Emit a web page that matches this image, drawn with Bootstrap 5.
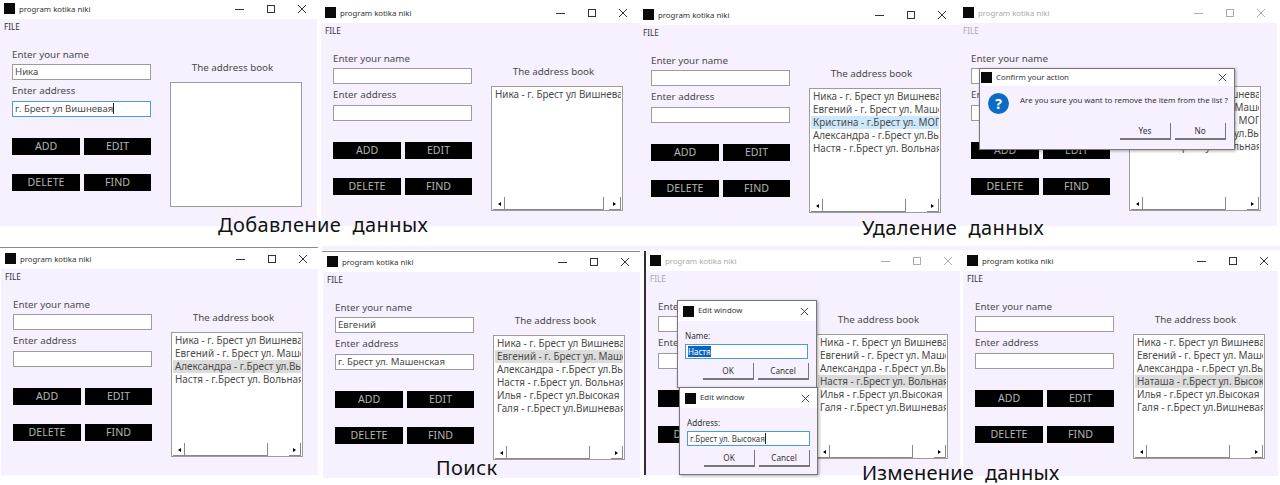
<!DOCTYPE html>
<html lang="ru">
<head>
  <meta charset="UTF-8" />
  <meta name="viewport" content="width=device-width, initial-scale=1" />
  <title>program kotika niki</title>
  <link href="https://cdn.jsdelivr.net/npm/bootstrap@5.3.0/dist/css/bootstrap.min.css" rel="stylesheet" />
  <style>
    body { background: #fff; overflow: hidden; font-family: "Noto Sans", "Open Sans", sans-serif; color: #4a4a4a; }
    .collage { position: relative; width: 1280px; height: 485px; overflow: hidden; }

    /* windows on the collage */
    .app-win { position: absolute; background: #f7f1ff; overflow: hidden; }
    #w1 { left: 0; top: 0; width: 317px; height: 226px; }
    #w2 { left: 321px; top: 4px; width: 319px; height: 222px; }
    #w3 { left: 639px; top: 6px; width: 321px; height: 220px; }
    #w4 { left: 959px; top: 4px; width: 318px; height: 222px; }
    #w5 { left: 1px; top: 250px; width: 317px; height: 225px; }
    #w6 { left: 323px; top: 253px; width: 317px; height: 225px; }
    #w7 { left: 646px; top: 252px; width: 314px; height: 223px; }
    #w8 { left: 963px; top: 252px; width: 315px; height: 224px; }
    .top-line { position: absolute; background: #8c8c8c; height: 1px; }
    #l5 { left: 0; top: 247px; width: 318px; }
    #l6 { left: 322px; top: 251px; width: 318px; }
    #l7 { left: 644px; top: 251px; width: 2px; height: 224px; background: #3a2a33; }
    #band { left: 322px; top: 246px; width: 958px; height: 4px; background: #f7f1ff; }

    .win-head { height: 19px; background: #fff; padding-left: 4px; color: #333; font-size: 7.8px; }
    .win-logo { width: 11px; height: 11px; margin-top: -2px; background: #0a0a0a; flex: none; margin-right: 4px; }
    .win-ctrl { margin-left: auto; margin-top: -2px; padding-right: 9px; gap: 19px; }
    .win-ctrl svg { display: block; width: 12px; height: 12px; }
    #w2 .win-ctrl { padding-right: 11px; }
    #w3 .win-ctrl { padding-right: 12px; }
    #w4 .win-ctrl { padding-right: 10px; }
    #w7 .win-ctrl { padding-right: 6px; }
    #w8 .win-ctrl { padding-right: 8px; }
    .win-menu { height: 16px; padding-left: 4px; font-size: 8.2px; line-height: 16px; color: #333; }
    .is-idle .win-head, .is-idle .win-menu { color: #aaa; }
    .is-idle .win-ctrl { opacity: .4; }

    .side-left { width: 139px; margin-left: 12px; margin-right: 19px; flex: none; padding-top: 12px; }
    .side-right { width: 132px; flex: none; padding-top: 25px; }
    .field-cap { height: 17px; line-height: 16px; font-size: 9.8px; white-space: nowrap; }
    .field-gap { height: 18px; margin-top: 3px; }
    .form-control.win-input { height: 16px; min-height: 0; padding: 0 2px; border: 1px solid #9c9c9c; border-radius: 0; font-size: 9.6px; line-height: 14px; color: #4a4a4a; background: #fff; white-space: nowrap; box-shadow: none; }
    .form-control.win-input.is-focus { border-color: #4a9ae0; }
    .caret-bar { display: inline-block; width: 1px; height: 11px; background: #222; vertical-align: -2px; }
    .btn-grid { display: grid; grid-template-columns: 68px 67px; column-gap: 4px; row-gap: 19px; margin-top: 21px; }
    .btn.win-black { height: 17px; padding: 0; border: 0; border-radius: 0; background: #000; color: #b4b4b4; font-size: 10.6px; line-height: 17px; }

    .book-cap { height: 16px; line-height: 16px; margin-bottom: 6px; padding-right: 7px; font-size: 9.8px; text-align: center; white-space: nowrap; }
    .book-list { position: relative; height: 125px; background: #fff; border: 1px solid #9c9c9c; padding: 1px 1px 0 1px; overflow: hidden; }
    .book-row { height: 13px; line-height: 13px; padding-left: 2px; font-size: 9.9px; white-space: nowrap; overflow: hidden; }
    .book-row.is-sel { background: #dcdcdc; }
    .book-row.is-hot { background: #cde8fb; }
    .scroll-bar { position: absolute; left: 1px; right: 1px; bottom: 0; height: 13px; background: #fff; }
    .scroll-arrow { position: absolute; top: 5px; width: 0; height: 0; border-top: 2px solid transparent; border-bottom: 2px solid transparent; }
    .scroll-arrow.to-left { left: 5px; border-right: 3px solid #000; }
    .scroll-arrow.to-right { right: 5px; border-left: 3px solid #000; }
    .scroll-start { position: absolute; left: 0; top: 0; width: 11px; height: 13px; border-bottom: 1px solid #8a8a8a; }
    .scroll-thumb { position: absolute; left: 11px; top: 0; width: 84px; height: 13px; border: 1px solid #8a8a8a; border-top: 0; }
    .scroll-thumb.scroll-wide { width: 100px; }
    .scroll-end { position: absolute; right: 0; top: 0; width: 12px; height: 13px; border-right: 1px solid #8a8a8a; border-bottom: 1px solid #8a8a8a; }

    /* dialogs lie over the windows */
    .pop-win { position: absolute; background: #f7f1ff; border: 1px solid #777; box-shadow: 1px 1px 3px rgba(0,0,0,.35); }
    #confirm { left: 979px; top: 68px; width: 256px; height: 82px; }
    #edit1 { left: 677px; top: 300px; width: 140px; height: 88px; }
    #edit2 { left: 679px; top: 387px; width: 139px; height: 88px; }
    .pop-head { height: 20px; background: #fff; padding: 0 6px 0 5px; font-size: 7.8px; color: #333; }
    .pop-head .win-logo { margin-top: 0; }
    #confirm .pop-head { height: 17px; padding-left: 1px; }
    .pop-x { width: 11px; height: 11px; margin-left: auto; }
    .pop-body { padding: 8px 7px 0; }
    .btn.pop-btn { width: 51px; height: 17px; padding: 0; border: 0; border-right: 1px solid #777; border-bottom: 2px solid #777; border-radius: 0; background: #f7f1ff; color: #333; font-size: 8.2px; line-height: 15px; }
    .pop-cap { font-size: 8.2px; line-height: 13px; height: 15px; color: #333; }
    .pop-text { margin-top: 1px; font-size: 7.9px; line-height: 13px; white-space: nowrap; color: #333; }
    .ask-icon { width: 21px; height: 21px; flex: none; }
    .ask-row { padding: 7px 8px 0; gap: 11px; }
    .confirm-actions { margin-top: 9px; padding-right: 8px; }
    .form-control.pop-input { width: 123px; height: 15px; min-height: 0; padding: 0 2px; border: 1px solid #4a9ae0; border-radius: 0; font-size: 8px; line-height: 13px; color: #444; background: #fff; white-space: nowrap; box-shadow: none; }
    .picked-text { background: #0a64c8; color: #fff; }

    .sheet-title { position: absolute; font-size: 20px; line-height: 24px; color: #111; white-space: pre; letter-spacing: .4px; }
    #t1 { left: 218px; top: 213px; }
    #t2 { left: 862px; top: 216px; }
    #t3 { left: 436px; top: 456px; }
    #t4 { left: 862px; top: 461px; letter-spacing: .2px; }
  </style>
</head>
<body>
  <svg class="d-none">
    <symbol id="i-min" viewBox="0 0 12 12"><path d="M1 6.5h9" stroke="#333" fill="none" /></symbol>
    <symbol id="i-max" viewBox="0 0 12 12"><rect x="2.5" y="2.5" width="7" height="7" stroke="#333" fill="none" /></symbol>
    <symbol id="i-close" viewBox="0 0 12 12"><path d="M2 2l8 8M10 2l-8 8" stroke="#333" fill="none" /></symbol>
  </svg>

  <div class="collage">
    <div id="band" class="top-line"></div>
    <div id="l5" class="top-line"></div>
    <div id="l6" class="top-line"></div>
    <div id="l7" class="top-line"></div>

    <!-- add -->
    <div id="w1" class="app-win">
      <div class="win-head d-flex align-items-center"><span class="win-logo"></span>program kotika niki<div class="win-ctrl d-flex"><svg><use href="#i-min" /></svg><svg><use href="#i-max" /></svg><svg><use href="#i-close" /></svg></div></div>
      <div class="win-menu">FILE</div>
      <div class="d-flex">
        <div class="side-left">
          <div class="field-cap">Enter your name</div>
          <div class="form-control win-input">Ника</div>
          <div class="field-cap field-gap">Enter address</div>
          <div class="form-control win-input is-focus">г. Брест ул Вишневая<span class="caret-bar"></span></div>
          <div class="btn-grid"><button class="btn win-black">ADD</button><button class="btn win-black">EDIT</button><button class="btn win-black">DELETE</button><button class="btn win-black">FIND</button></div>
        </div>
        <div class="side-right">
          <div class="book-cap">The address book</div>
          <div class="book-list"></div>
        </div>
      </div>
    </div>

    <div id="w2" class="app-win">
      <div class="win-head d-flex align-items-center"><span class="win-logo"></span>program kotika niki<div class="win-ctrl d-flex"><svg><use href="#i-min" /></svg><svg><use href="#i-max" /></svg><svg><use href="#i-close" /></svg></div></div>
      <div class="win-menu">FILE</div>
      <div class="d-flex">
        <div class="side-left">
          <div class="field-cap">Enter your name</div>
          <div class="form-control win-input"></div>
          <div class="field-cap field-gap">Enter address</div>
          <div class="form-control win-input"></div>
          <div class="btn-grid"><button class="btn win-black">ADD</button><button class="btn win-black">EDIT</button><button class="btn win-black">DELETE</button><button class="btn win-black">FIND</button></div>
        </div>
        <div class="side-right">
          <div class="book-cap">The address book</div>
          <div class="book-list">
            <div class="book-row">Ника - г. Брест ул Вишневая</div>
            <div class="scroll-bar"><i class="scroll-start"></i><i class="scroll-arrow to-left"></i><i class="scroll-thumb scroll-wide"></i><i class="scroll-end"></i><i class="scroll-arrow to-right"></i></div>
          </div>
        </div>
      </div>
    </div>

    <!-- delete -->
    <div id="w3" class="app-win">
      <div class="win-head d-flex align-items-center"><span class="win-logo"></span>program kotika niki<div class="win-ctrl d-flex"><svg><use href="#i-min" /></svg><svg><use href="#i-max" /></svg><svg><use href="#i-close" /></svg></div></div>
      <div class="win-menu">FILE</div>
      <div class="d-flex">
        <div class="side-left">
          <div class="field-cap">Enter your name</div>
          <div class="form-control win-input"></div>
          <div class="field-cap field-gap">Enter address</div>
          <div class="form-control win-input"></div>
          <div class="btn-grid"><button class="btn win-black">ADD</button><button class="btn win-black">EDIT</button><button class="btn win-black">DELETE</button><button class="btn win-black">FIND</button></div>
        </div>
        <div class="side-right">
          <div class="book-cap">The address book</div>
          <div class="book-list">
            <div class="book-row">Ника - г. Брест ул Вишневая</div>
            <div class="book-row">Евгений - г. Брест ул. Машенская</div>
            <div class="book-row is-hot">Кристина - г.Брест ул. МОПРа</div>
            <div class="book-row">Александра - г.Брест ул.Высокая</div>
            <div class="book-row">Настя - г.Брест ул. Вольная</div>
            <div class="scroll-bar"><i class="scroll-start"></i><i class="scroll-arrow to-left"></i><i class="scroll-thumb"></i><i class="scroll-end"></i><i class="scroll-arrow to-right"></i></div>
          </div>
        </div>
      </div>
    </div>

    <div id="w4" class="app-win is-idle">
      <div class="win-head d-flex align-items-center"><span class="win-logo"></span>program kotika niki<div class="win-ctrl d-flex"><svg><use href="#i-min" /></svg><svg><use href="#i-max" /></svg><svg><use href="#i-close" /></svg></div></div>
      <div class="win-menu">FILE</div>
      <div class="d-flex">
        <div class="side-left">
          <div class="field-cap">Enter your name</div>
          <div class="form-control win-input"></div>
          <div class="field-cap field-gap">Enter address</div>
          <div class="form-control win-input"></div>
          <div class="btn-grid"><button class="btn win-black">ADD</button><button class="btn win-black">EDIT</button><button class="btn win-black">DELETE</button><button class="btn win-black">FIND</button></div>
        </div>
        <div class="side-right">
          <div class="book-cap">The address book</div>
          <div class="book-list">
            <div class="book-row">Ника - г. Брест ул Вишневая</div>
            <div class="book-row">Евгений - г. Брест ул. Машенская</div>
            <div class="book-row">Кристина - г.Брест ул. МОПРа</div>
            <div class="book-row">Александра - г.Брест ул.Высокая</div>
            <div class="book-row">Настя - г.Брест ул. Вольная</div>
            <div class="scroll-bar"><i class="scroll-start"></i><i class="scroll-arrow to-left"></i><i class="scroll-thumb"></i><i class="scroll-end"></i><i class="scroll-arrow to-right"></i></div>
          </div>
        </div>
      </div>
    </div>

    <div id="confirm" class="pop-win">
      <div class="pop-head d-flex align-items-center"><span class="win-logo"></span>Confirm your action<svg class="pop-x"><use href="#i-close" /></svg></div>
      <div class="d-flex ask-row">
        <svg class="ask-icon" viewBox="0 0 21 21"><circle cx="10.5" cy="10.5" r="10.5" fill="#0a6cc4" /><text x="10.5" y="15.5" font-size="14" font-weight="700" text-anchor="middle" fill="#fff" font-family="Noto Sans, sans-serif">?</text></svg>
        <div class="pop-text">Are you sure you want to remove the item from the list ?</div>
      </div>
      <div class="d-flex justify-content-end gap-1 confirm-actions"><button class="btn pop-btn">Yes</button><button class="btn pop-btn">No</button></div>
    </div>

    <!-- search -->
    <div id="w5" class="app-win">
      <div class="win-head d-flex align-items-center"><span class="win-logo"></span>program kotika niki<div class="win-ctrl d-flex"><svg><use href="#i-min" /></svg><svg><use href="#i-max" /></svg><svg><use href="#i-close" /></svg></div></div>
      <div class="win-menu">FILE</div>
      <div class="d-flex">
        <div class="side-left">
          <div class="field-cap">Enter your name</div>
          <div class="form-control win-input"></div>
          <div class="field-cap field-gap">Enter address</div>
          <div class="form-control win-input"></div>
          <div class="btn-grid"><button class="btn win-black">ADD</button><button class="btn win-black">EDIT</button><button class="btn win-black">DELETE</button><button class="btn win-black">FIND</button></div>
        </div>
        <div class="side-right">
          <div class="book-cap">The address book</div>
          <div class="book-list">
            <div class="book-row">Ника - г. Брест ул Вишневая</div>
            <div class="book-row">Евгений - г. Брест ул. Машенская</div>
            <div class="book-row is-sel">Александра - г.Брест ул.Высокая</div>
            <div class="book-row">Настя - г.Брест ул. Вольная</div>
            <div class="scroll-bar"><i class="scroll-start"></i><i class="scroll-arrow to-left"></i><i class="scroll-thumb"></i><i class="scroll-end"></i><i class="scroll-arrow to-right"></i></div>
          </div>
        </div>
      </div>
    </div>

    <div id="w6" class="app-win">
      <div class="win-head d-flex align-items-center"><span class="win-logo"></span>program kotika niki<div class="win-ctrl d-flex"><svg><use href="#i-min" /></svg><svg><use href="#i-max" /></svg><svg><use href="#i-close" /></svg></div></div>
      <div class="win-menu">FILE</div>
      <div class="d-flex">
        <div class="side-left">
          <div class="field-cap">Enter your name</div>
          <div class="form-control win-input">Евгений</div>
          <div class="field-cap field-gap">Enter address</div>
          <div class="form-control win-input">г. Брест ул. Машенская</div>
          <div class="btn-grid"><button class="btn win-black">ADD</button><button class="btn win-black">EDIT</button><button class="btn win-black">DELETE</button><button class="btn win-black">FIND</button></div>
        </div>
        <div class="side-right">
          <div class="book-cap">The address book</div>
          <div class="book-list">
            <div class="book-row">Ника - г. Брест ул Вишневая</div>
            <div class="book-row is-sel">Евгений - г. Брест ул. Машенская</div>
            <div class="book-row">Александра - г.Брест ул.Высокая</div>
            <div class="book-row">Настя - г.Брест ул. Вольная</div>
            <div class="book-row">Илья - г.Брест ул.Высокая</div>
            <div class="book-row">Галя - г.Брест ул.Вишневая</div>
            <div class="scroll-bar"><i class="scroll-start"></i><i class="scroll-arrow to-left"></i><i class="scroll-thumb"></i><i class="scroll-end"></i><i class="scroll-arrow to-right"></i></div>
          </div>
        </div>
      </div>
    </div>

    <!-- edit -->
    <div id="w7" class="app-win is-idle">
      <div class="win-head d-flex align-items-center"><span class="win-logo"></span>program kotika niki<div class="win-ctrl d-flex"><svg><use href="#i-min" /></svg><svg><use href="#i-max" /></svg><svg><use href="#i-close" /></svg></div></div>
      <div class="win-menu">FILE</div>
      <div class="d-flex">
        <div class="side-left">
          <div class="field-cap">Enter your name</div>
          <div class="form-control win-input"></div>
          <div class="field-cap field-gap">Enter address</div>
          <div class="form-control win-input"></div>
          <div class="btn-grid"><button class="btn win-black">ADD</button><button class="btn win-black">EDIT</button><button class="btn win-black">DELETE</button><button class="btn win-black">FIND</button></div>
        </div>
        <div class="side-right">
          <div class="book-cap">The address book</div>
          <div class="book-list">
            <div class="book-row">Ника - г. Брест ул Вишневая</div>
            <div class="book-row">Евгений - г. Брест ул. Машенская</div>
            <div class="book-row">Александра - г.Брест ул.Высокая</div>
            <div class="book-row is-sel">Настя - г.Брест ул. Вольная</div>
            <div class="book-row">Илья - г.Брест ул.Высокая</div>
            <div class="book-row">Галя - г.Брест ул.Вишневая</div>
            <div class="scroll-bar"><i class="scroll-start"></i><i class="scroll-arrow to-left"></i><i class="scroll-thumb"></i><i class="scroll-end"></i><i class="scroll-arrow to-right"></i></div>
          </div>
        </div>
      </div>
    </div>

    <div id="edit1" class="pop-win">
      <div class="pop-head d-flex align-items-center"><span class="win-logo"></span>Edit window<svg class="pop-x"><use href="#i-close" /></svg></div>
      <div class="pop-body">
        <div class="pop-cap">Name:</div>
        <div class="form-control pop-input"><span class="picked-text">Настя</span></div>
        <div class="d-flex justify-content-end gap-1 mt-1"><button class="btn pop-btn">OK</button><button class="btn pop-btn">Cancel</button></div>
      </div>
    </div>
    <div id="edit2" class="pop-win">
      <div class="pop-head d-flex align-items-center"><span class="win-logo"></span>Edit window<svg class="pop-x"><use href="#i-close" /></svg></div>
      <div class="pop-body">
        <div class="pop-cap">Address:</div>
        <div class="form-control pop-input">г.Брест ул. Высокая<span class="caret-bar"></span></div>
        <div class="d-flex justify-content-end gap-1 mt-1"><button class="btn pop-btn">OK</button><button class="btn pop-btn">Cancel</button></div>
      </div>
    </div>

    <div id="w8" class="app-win">
      <div class="win-head d-flex align-items-center"><span class="win-logo"></span>program kotika niki<div class="win-ctrl d-flex"><svg><use href="#i-min" /></svg><svg><use href="#i-max" /></svg><svg><use href="#i-close" /></svg></div></div>
      <div class="win-menu">FILE</div>
      <div class="d-flex">
        <div class="side-left">
          <div class="field-cap">Enter your name</div>
          <div class="form-control win-input"></div>
          <div class="field-cap field-gap">Enter address</div>
          <div class="form-control win-input"></div>
          <div class="btn-grid"><button class="btn win-black">ADD</button><button class="btn win-black">EDIT</button><button class="btn win-black">DELETE</button><button class="btn win-black">FIND</button></div>
        </div>
        <div class="side-right">
          <div class="book-cap">The address book</div>
          <div class="book-list">
            <div class="book-row">Ника - г. Брест ул Вишневая</div>
            <div class="book-row">Евгений - г. Брест ул. Машенская</div>
            <div class="book-row">Александра - г.Брест ул.Высокая</div>
            <div class="book-row is-sel">Наташа - г.Брест ул. Высокая</div>
            <div class="book-row">Илья - г.Брест ул.Высокая</div>
            <div class="book-row">Галя - г.Брест ул.Вишневая</div>
            <div class="scroll-bar"><i class="scroll-start"></i><i class="scroll-arrow to-left"></i><i class="scroll-thumb"></i><i class="scroll-end"></i><i class="scroll-arrow to-right"></i></div>
          </div>
        </div>
      </div>
    </div>

    <div id="t1" class="sheet-title">Добавление  данных</div>
    <div id="t2" class="sheet-title">Удаление  данных</div>
    <div id="t3" class="sheet-title">Поиск</div>
    <div id="t4" class="sheet-title">Изменение  данных</div>
  </div>

  <script src="https://cdn.jsdelivr.net/npm/bootstrap@5.3.0/dist/js/bootstrap.bundle.min.js"></script>
</body>
</html>
